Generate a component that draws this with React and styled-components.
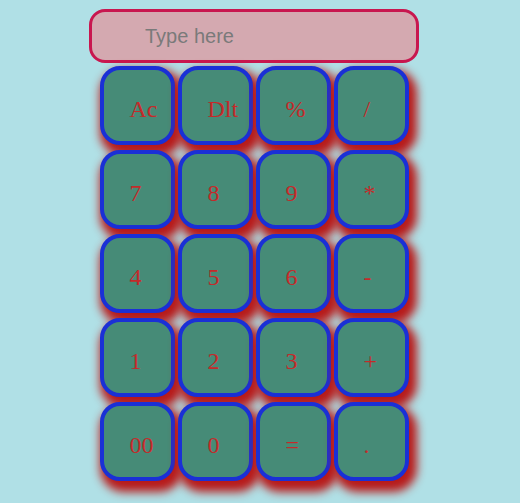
import styled, { createGlobalStyle } from "styled-components";

const GlobalStyle = createGlobalStyle`
  html, body {
    margin: 0;
    padding: 0;
    background: #b0e0e6;
    font-family: "Liberation Serif", "Times New Roman", serif;
  }
`;

const keys = [
  "Ac", "Dlt", "%", "/",
  "7", "8", "9", "*",
  "4", "5", "6", "-",
  "1", "2", "3", "+",
  "00", "0", "=", ".",
];

const Page = styled.div`
  width: 520px;
  height: 503px;
  display: flex;
  flex-direction: column;
  align-items: center;
  padding: 9px 0 0 0;
  box-sizing: border-box;
  margin-left: -6px;
`;

const Display = styled.input`
  width: 330px;
  height: 54px;
  box-sizing: border-box;
  border: 3px solid #c8174f;
  border-radius: 16px;
  background: #d4a9b0;
  padding: 0 0 0 53px;
  font-family: "Liberation Sans", Arial, sans-serif;
  font-size: 20px;
  color: #333;
  outline: none;
  &::placeholder {
    color: #7a7a7a;
  }
`;

const Pad = styled.div`
  display: grid;
  grid-template-columns: repeat(4, 75px);
  grid-auto-rows: 79px;
  column-gap: 3px;
  row-gap: 5px;
  margin-top: 3px;
`;

const Key = styled.button`
  box-sizing: border-box;
  width: 75px;
  height: 79px;
  background: #468b77;
  border: 4px solid #1a30d6;
  border-radius: 20px;
  box-shadow: 4px 7px 10px 4px #b81a1a;
  color: #c42a2a;
  font-family: "Liberation Serif", "Times New Roman", serif;
  font-size: 24px;
  text-align: left;
  padding: 7px 0 0 26px;
  cursor: pointer;
`;

export default function App() {
  return (
    <>
      <GlobalStyle />
      <Page>
        <Display placeholder="Type here" />
        <Pad>
          {keys.map((k) => (
            <Key key={k}>{k}</Key>
          ))}
        </Pad>
      </Page>
    </>
  );
}
